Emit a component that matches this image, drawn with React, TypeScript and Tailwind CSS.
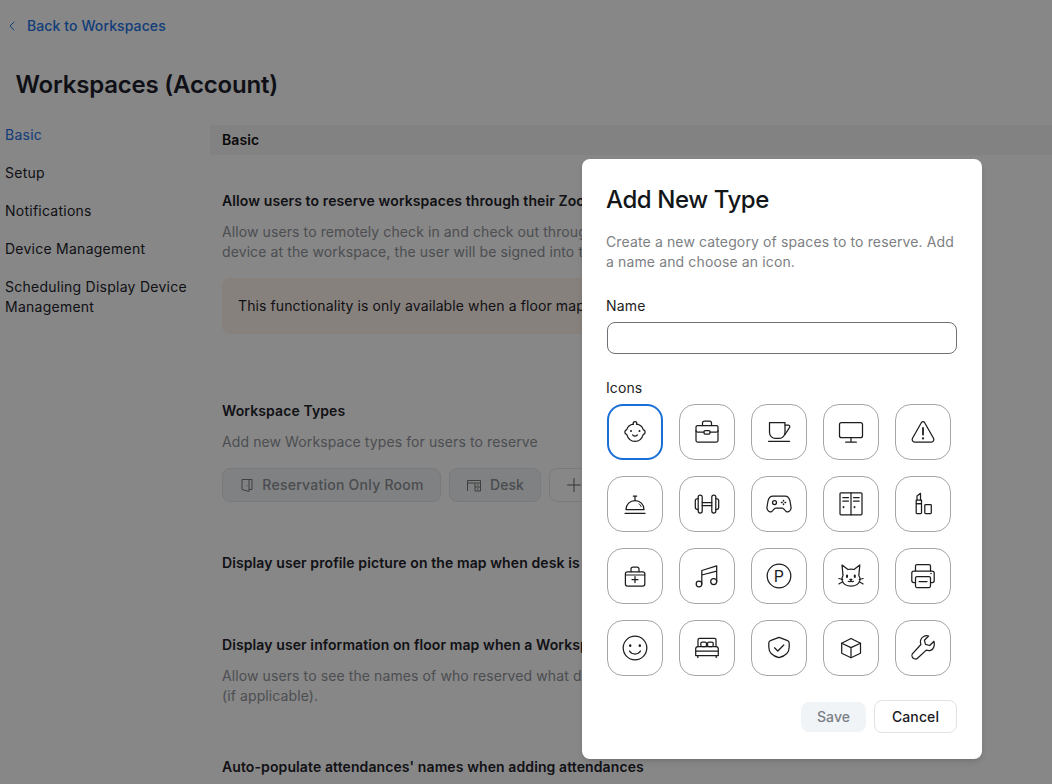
import type { ReactNode } from 'react';
import { ChevronLeft, Plus } from 'lucide-react';

function Ico({ children }: { children: ReactNode }) {
  return (
    <svg viewBox="0 0 32 32" className="w-8 h-8" fill="none" stroke="#1d1d1f" strokeWidth="1.25" strokeLinecap="round" strokeLinejoin="round">
      {children}
    </svg>
  );
}

const icons: ReactNode[] = [
  // baby
  <>
    <path d="M14.4 8.2C10.8 8.8 8.4 11.2 7.8 13.6 5.4 14.4 5 17.4 7.8 18.6 9 22.6 12.2 25.4 16 25.4s7-2.8 8.2-6.8c2.8-1.2 2.4-4.2 0-5-.6-2.4-3-4.800-6.600-5.400" />
    <path d="M14.400 8.200a1.800 1.800 0 1 1 3.200 0" />
    <path d="M12 15v.1M20.500 15v.1" strokeWidth="2" />
    <path d="M13.700 19c1.300 1.200 3.300 1.200 4.600 0" />
  </>,
  // briefcase
  <>
    <rect x="5" y="9.500" width="22" height="16.500" rx="1.500" />
    <path d="M11.500 9.500V7a2 2 0 0 1 2-2h5a2 2 0 0 1 2 2v2.500" />
    <path d="M5 14.500c0 1 .8 1.500 1.500 1.500H13M19 16h6.500c.7 0 1.500-.5 1.500-1.500" />
    <rect x="13" y="14.500" width="6" height="3.500" rx="1" />
  </>,
  // coffee
  <>
    <path d="M6.500 6.500H22v10a5.800 5.800 0 0 1-5.800 5.800h-3.900a5.800 5.800 0 0 1-5.800-5.800z" />
    <path d="M22 9h3.200c1.200 0 2 1.300 1.400 2.400L22 18.500" />
    <path d="M5.500 25.300h21" />
  </>,
  // monitor
  <>
    <rect x="4.500" y="6.500" width="23" height="15.200" rx="2" />
    <path d="M16 21.700v4.500M10.700 26.200h10.600" />
  </>,
  // warning
  <>
    <path d="M14.300 6.700 5.500 22.300c-.9 1.600.2 3.700 2 3.700h17c1.800 0 2.900-2.100 2-3.700L17.700 6.700c-.8-1.400-2.600-1.400-3.400 0z" />
    <path d="M16 12v6.500" strokeWidth="1.800" />
    <path d="M16 22.300v.2" strokeWidth="2.200" />
  </>,
  // service bell
  <>
    <path d="M7 21.500a9 9 0 0 1 18 0z" />
    <path d="M16 12.500V8.500M14.300 8h3.400" />
    <path d="M6 25.300h20" />
    <path d="M20 15.800c1 .7 1.700 1.600 2 2.700" strokeWidth="1" />
  </>,
  // dumbbell
  <>
    <rect x="7.200" y="7" width="4" height="18" rx="2" />
    <rect x="20.800" y="7" width="4" height="18" rx="2" />
    <path d="M7.200 10.500C5.300 10.500 4.300 11.200 4.300 12.500v7c0 1.300 1 2 2.900 2M24.800 10.500c1.900 0 2.900.7 2.900 2v7c0 1.300-1 2-2.900 2" />
    <path d="M11.200 14.500h9.600M11.200 17.500h9.600" />
  </>,
  // gamepad
  <>
    <path d="M10 8.200h12c2.800 0 4.300 2 5 4.800l1 6c.4 3.200-2.300 5.700-4.600 4.600-1.700-.8-2.600-3.600-4.100-3.600h-6.600c-1.500 0-2.400 2.800-4.100 3.600C6.300 24.700 3.600 22.200 4 19l1-6c.7-2.800 2.200-4.800 5-4.800z" />
    <circle cx="11.500" cy="14.500" r="2" />
    <path d="M20.500 12.500v.6M20.500 16v.6M18.500 14.500h.6M22 14.500h.6" strokeWidth="1.500" />
  </>,
  // lockers
  <>
    <rect x="5" y="4.800" width="22" height="22" rx="1" />
    <path d="M16 4.800v22" />
    <path d="M7.800 9.500h5.700M7.800 13h5.700M18.500 9.500h5.700M18.500 13h5.700" />
    <path d="M8.500 19v.3M19.500 19v.3" strokeWidth="1.800" />
  </>,
  // lipstick
  <>
    <path d="M10 12V8l3.500-2.700V12" />
    <rect x="9.200" y="12" width="5.300" height="3.500" />
    <rect x="9.200" y="15.500" width="5.300" height="10" rx=".8" />
    <rect x="17.800" y="16.500" width="6.500" height="9" rx=".8" />
  </>,
  // medkit
  <>
    <rect x="6.400" y="11.800" width="19.400" height="14.200" rx="2" />
    <path d="M12 11.800V9a2 2 0 0 1 2-2h4a2 2 0 0 1 2 2v2.800" />
    <path d="M6.400 15h19.400" strokeWidth="1" />
    <path d="M16 16.500v6M13 19.500h6" />
  </>,
  // music
  <>
    <circle cx="8" cy="24" r="2.800" />
    <circle cx="22.700" cy="21.500" r="3" />
    <path d="M10.800 24V10.500L25.700 5.800v15.700M10.800 15l14.900-3.800" />
  </>,
  // parking
  <>
    <circle cx="16" cy="16" r="11.800" />
    <text x="16" y="21.600" textAnchor="middle" fontSize="16" fontFamily="Inter, sans-serif" fill="#1d1d1f" stroke="none">P</text>
  </>,
  // cat
  <>
    <path d="M8 15.500 7 5l6 4.500c2-.6 4-.6 6 0L24.800 5l-1 10.500c1 1.500 1.400 3 1.200 4.500-.6 3.800-4.500 6-9 6s-8.400-2.200-9-6c-.2-1.500.2-3 1-4.500z" />
    <path d="M12 15.500v1.500M19.800 15.500v1.500" strokeWidth="2" />
    <path d="M14.800 19.300h2.200l-1.100 1.100zM15.900 20.500c-.3 1.200-1.700 1.500-2.700.8M15.900 20.500c.3 1.200 1.700 1.500 2.700.8" strokeWidth="1.100" />
    <path d="M3.800 18.500l4 1M3.800 24l4-2.200M28.200 18.500l-4 1M28.200 24l-4-2.200" strokeWidth="1.100" />
  </>,
  // printer
  <>
    <path d="M8.500 11V6a1.500 1.500 0 0 1 1.500-1.500h12A1.500 1.500 0 0 1 23.500 6v5" />
    <path d="M8.500 22.500H6.800A2 2 0 0 1 4.800 20.500V13a2 2 0 0 1 2-2h18.400a2 2 0 0 1 2 2v7.500a2 2 0 0 1-2 2h-1.700" />
    <rect x="8.500" y="16.500" width="15" height="11" rx="1.500" />
    <path d="M12 21.500h8" />
    <path d="M24 13.500v.1" strokeWidth="1.500" />
  </>,
  // smile
  <>
    <circle cx="16" cy="16" r="11.800" />
    <path d="M11.200 13.500v.3M20.800 13.500v.3" strokeWidth="2.400" />
    <path d="M10.500 19c1.200 2 3.200 3 5.500 3s4.300-1 5.500-3" />
  </>,
  // bed
  <>
    <path d="M7 14.500V7.800a1.500 1.500 0 0 1 1.500-1.500h15A1.500 1.500 0 0 1 25 7.800v6.700" />
    <rect x="9.800" y="10" width="5.700" height="4.500" rx="1.500" />
    <rect x="16.500" y="10" width="5.700" height="4.500" rx="1.500" />
    <path d="M7 14.500h18c1.300 0 2.300 1 2.300 2.300v6.700h-22.600v-6.700c0-1.300 1-2.300 2.300-2.300zM4.700 19.200h22.600M6.800 23.500v2.100M25.200 23.500v2.100" />
  </>,
  // shield check
  <>
    <path d="M16 5.400 24 8.400c1.200.4 2.200 1.300 2.200 2.500V15c0 5.500-4.300 9.200-10.200 10.600C10.100 24.200 5.800 20.500 5.800 15v-4.100c0-1.200 1-2.100 2.200-2.500z" />
    <path d="M11.500 15.800l3.300 3.200 6-6" />
  </>,
  // box
  <>
    <path d="M16 6.500 25.500 11.200v10L16 25.700 6.700 21.200v-10z" />
    <path d="M6.700 11.200 16 15.600l9.500-4.400M16 15.600v10" />
  </>,
  // wrench
  <>
    <path d="M27 9.300l-4.300 4.200-4.200-1.100-1.100-4.200L21.600 4c-3.500-.9-7 .7-8 4.200-.4 1.500-.2 3 .3 4.300L5.800 21.300c-1.200 1.200-1 3.500.2 4.700s3.300 1.400 4.500.2l8.800-8.100c1.400.5 2.800.6 4.300.2 3.500-1 4.300-5.300 3.400-9z" />
  </>,
];

const sideItems = ['Setup', 'Notifications', 'Device Management'];

export default function App() {
  return (
    <div className="relative h-[784px] overflow-hidden bg-white font-[family-name:Inter,sans-serif] text-sm tracking-[0.1px] text-[#23232b]">
      {/* Page behind the dialog */}
      <div className="flex h-[52px] items-center pl-1 font-medium text-[#2474e6]">
        <ChevronLeft className="w-4 h-4 mr-[7px]" strokeWidth={1.5} />
        <span>Back to Workspaces</span>
      </div>
      <h1 className="pl-[15.5px] mt-[15px] text-2xl leading-9 font-semibold tracking-[-0.2px] text-[#1e1f2c]">Workspaces (Account)</h1>

      <div className="flex mt-[22px]">
        <nav className="w-[210px] shrink-0 pl-[5px] pr-4 flex flex-col gap-[18px] tracking-[0.25px]">
          <a className="text-[#2474e6]">Basic</a>
          {sideItems.map((s) => (
            <a key={s}>{s}</a>
          ))}
          <a>Scheduling Display Device Management</a>
        </nav>

        <main className="flex-1 min-w-0">
          <div className="h-[30px] flex items-center pl-3 font-semibold bg-[#f6f6f6] text-[#111]">Basic</div>
          <div className="pl-3 pr-[130px]">
            <h3 className="mt-[36px] font-semibold">Allow users to reserve workspaces through their Zoom Rooms</h3>
            <p className="mt-[11px] text-[#90939a]">
              Allow users to remotely check in and check out through their Zoom client. When connected to a
              <br />
              device at the workspace, the user will be signed into the device.
            </p>
            <div className="mt-4 h-[56px] flex items-center px-4 rounded-lg bg-[#fff3ec]">
              This functionality is only available when a floor map has been added.
            </div>

            <h3 className="mt-[67px] font-semibold">Workspace Types</h3>
            <p className="mt-[11px] text-[#90939a]">Add new Workspace types for users to reserve</p>
            <div className="mt-4 flex gap-2">
              <div className="h-[34px] w-[219px] flex items-center justify-center gap-[7px] rounded-lg border border-[#e4e6e9] bg-[#f1f3f5] font-medium tracking-[0.25px] text-[#8d9097]">
                <svg viewBox="0 0 16 16" className="w-4 h-4" fill="none" stroke="#777" strokeWidth="1">
                  <path d="M3 2.500h10v10h-3M3 2.500v10l7 2v-12z" />
                  <path d="M8.200 8.500v.5" />
                </svg>
                Reservation Only Room
              </div>
              <div className="h-[34px] w-[92px] flex items-center justify-center gap-2 rounded-lg border border-[#e4e6e9] bg-[#f1f3f5] font-medium text-[#8d9097]">
                <svg viewBox="0 0 16 16" className="w-4 h-4" fill="none" stroke="#777" strokeWidth="1">
                  <path d="M1.500 14V3.500h13V14M1.500 6h13M9 6v8M9 10h5.500M9 14h5.500M11 8h1.500M11 12h1.500" />
                </svg>
                Desk
              </div>
              <div className="h-[34px] w-[92px] flex items-center pl-[13px] rounded-lg border border-[#e4e6e9]">
                <Plus className="w-[22px] h-[22px] text-[#666]" strokeWidth={1.1} />
              </div>
            </div>

            <h3 className="mt-[51px] font-semibold">Display user profile picture on the map when desk is reserved</h3>
            <h3 className="mt-[62px] font-semibold">Display user information on floor map when a Workspace is reserved</h3>
            <p className="mt-[11px] text-[#90939a]">
              Allow users to see the names of who reserved what desk or room on the floor map in the client
              <br />
              (if applicable).
            </p>
            <h3 className="mt-[51px] font-semibold">Auto-populate attendances' names when adding attendances</h3>
          </div>
        </main>
      </div>

      {/* Dialog */}
      <div className="absolute inset-0 bg-black/47 flex justify-end items-start pr-[70px] pt-[159px]">
        <div className="w-[400px] h-[600px] rounded-lg bg-white px-[25px] pt-[25px] shadow-md text-[#222]">
          <h2 className="-ml-px text-2xl leading-8 font-medium tracking-[-0.42px] text-[#131619]">Add New Type</h2>
          <p className="-ml-px mt-4 leading-5 tracking-[0.13px] text-[#7d7f83]">
            Create a new category of spaces to to reserve. Add a name and choose an icon.
          </p>
          <label className="-ml-px mt-[24px] block leading-5 tracking-[0.2px]">Name</label>
          <input className="mt-1.5 block w-full h-8 rounded-lg border border-[#6e7076] bg-white" />
          <label className="-ml-px mt-6 block leading-5">Icons</label>
          <div className="mt-1.5 grid grid-cols-5 gap-4 w-[344px]">
            {icons.map((ic, i) => (
              <button
                key={i}
                className={
                  i === 0
                    ? 'w-14 h-14 flex items-center justify-center rounded-[16px] border-2 border-[#1a6fd6]'
                    : 'w-14 h-14 flex items-center justify-center rounded-[16px] border border-[#a4a6aa]'
                }
              >
                <Ico>{ic}</Ico>
              </button>
            ))}
          </div>
          <div className="mt-6 flex justify-end items-center gap-2">
            <button className="h-[30px] w-[65px] rounded-lg bg-[#f1f4f6] font-medium text-[#7a7f87]">Save</button>
            <button className="h-[33px] w-[83px] rounded-lg border border-[#e1e2e5] bg-white font-medium text-[#1b1b1f]">Cancel</button>
          </div>
        </div>
      </div>
    </div>
  );
}
